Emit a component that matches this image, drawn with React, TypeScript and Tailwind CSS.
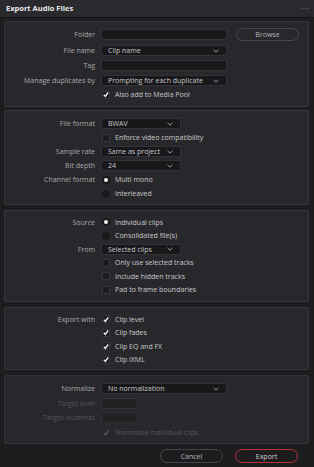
import React from "react";

function Chevron() {
  return (
    <svg width="6" height="4" viewBox="0 0 6 4" className="shrink-0">
      <path d="M0.5 0.8 L3 3.2 L5.5 0.8" fill="none" stroke="#a9a9ab" strokeWidth="0.9" />
    </svg>
  );
}

function Check({ muted }: { muted?: boolean }) {
  return (
    <svg width="7" height="7" viewBox="0 0 7 7">
      <path
        d="M1 3.9 L2.7 5.7 L6 1.2"
        fill="none"
        stroke={muted ? "#4e4e54" : "#f2f2f2"}
        strokeWidth="1.6"
      />
    </svg>
  );
}

function Row({
  label,
  children,
  dim,
  h = "h-[11px]",
}: {
  label?: string;
  children: React.ReactNode;
  dim?: boolean;
  h?: string;
}) {
  return (
    <div className={`flex items-center gap-[6px] ${h}`}>
      <span
        className={`w-[90px] shrink-0 text-right ${dim ? "text-[#55555a]" : "text-[#a8a8aa]"}`}
      >
        {label}
      </span>
      {children}
    </div>
  );
}

function Field({ w, text, drop }: { w: string; text?: string; drop?: boolean }) {
  return (
    <div
      className={`${w} flex h-[11px] items-center justify-between rounded-[1px] border border-[#333337] bg-[#18181a] pl-[6px] pr-[7px] text-[#c8c8ca]`}
    >
      <span>{text}</span>
      {drop && <Chevron />}
    </div>
  );
}

function Box({ on, muted }: { on?: boolean; muted?: boolean }) {
  return (
    <span
      className={`flex h-[8px] w-[8px] shrink-0 items-center justify-center ${
        muted ? "" : "rounded-[1px] border border-[#38383c] bg-[#1b1b1d]"
      }`}
    >
      {on && <Check muted={muted} />}
    </span>
  );
}

function Radio({ on }: { on?: boolean }) {
  return (
    <span className="flex h-[8px] w-[8px] shrink-0 items-center justify-center rounded-full bg-[#1a1a1c]">
      {on && <span className="h-[4px] w-[4px] rounded-full bg-[#f2f2f2]" />}
    </span>
  );
}

function Opt({ label, on, muted, radio }: { label: string; on?: boolean; muted?: boolean; radio?: boolean }) {
  return (
    <div className="flex items-center gap-[5px] pl-[1px]">
      {radio ? <Radio on={on} /> : <Box on={on} muted={muted} />}
      <span className={muted ? "text-[#55555a]" : "text-[#c8c8ca]"}>{label}</span>
    </div>
  );
}

function Panel({ h, mt, pt, gap, children }: { h: string; mt: string; pt: string; gap: string; children: React.ReactNode }) {
  return (
    <div
      className={`${h} ${mt} ${pt} ${gap} flex flex-col rounded-[2px] border border-[#36363a] bg-[#28282c]`}
    >
      {children}
    </div>
  );
}

export default function App() {
  return (
    <div
      className="h-[467px] w-[314px] overflow-hidden bg-[#1d1d20] text-[7px] leading-none"
      style={{ fontFamily: '"Open Sans", "Noto Sans", sans-serif' }}
    >
      <div className="flex h-[18px] items-center justify-between border-b border-[#151517] bg-[#2a2a2e] pl-[6px] pr-[5px]">
        <span className="text-[7.5px] font-bold text-[#e8e8ea]">Export Audio Files</span>
        <span className="flex gap-[1.5px]">
          <span className="h-[1.5px] w-[1.5px] rounded-full bg-[#8c8c90]" />
          <span className="h-[1.5px] w-[1.5px] rounded-full bg-[#8c8c90]" />
          <span className="h-[1.5px] w-[1.5px] rounded-full bg-[#8c8c90]" />
        </span>
      </div>

      <div className="px-[4px] pr-[5px]">
        <Panel h="h-[86px]" mt="mt-[3px]" pt="pt-[6px]" gap="gap-[4px]">
          <Row label="Folder" h="h-[13px]">
            <Field w="w-[126px]" />
            <button className="ml-[3px] flex h-[13px] w-[63px] items-center justify-center rounded-full border border-[#4a4a4e] bg-[#28282c] text-[#b3b3b6]">
              Browse
            </button>
          </Row>
          <Row label="File name">
            <Field w="w-[126px]" text="Clip name" drop />
          </Row>
          <Row label="Tag">
            <Field w="w-[126px]" />
          </Row>
          <Row label="Manage duplicates by">
            <Field w="w-[126px]" text="Prompting for each duplicate" drop />
          </Row>
          <Row h="h-[9px]">
            <Opt label="Also add to Media Pool" on />
          </Row>
        </Panel>

        <Panel h="h-[95px]" mt="mt-[3px]" pt="pt-[7px]" gap="gap-[3px]">
          <Row label="File format">
            <Field w="w-[80px]" text="BWAV" drop />
          </Row>
          <Row>
            <Opt label="Enforce video compatibility" />
          </Row>
          <Row label="Sample rate">
            <Field w="w-[80px]" text="Same as project" drop />
          </Row>
          <Row label="Bit depth">
            <Field w="w-[80px]" text="24" drop />
          </Row>
          <Row label="Channel format">
            <Opt label="Multi mono" on radio />
          </Row>
          <Row>
            <Opt label="Interleaved" radio />
          </Row>
        </Panel>

        <Panel h="h-[92px]" mt="mt-[5px]" pt="pt-[5.5px]" gap="gap-[2.6px]">
          <Row label="Source">
            <Opt label="Individual clips" on radio />
          </Row>
          <Row>
            <Opt label="Consolidated file(s)" radio />
          </Row>
          <Row label="From">
            <Field w="w-[80px]" text="Selected clips" drop />
          </Row>
          <Row>
            <Opt label="Only use selected tracks" />
          </Row>
          <Row>
            <Opt label="Include hidden tracks" />
          </Row>
          <Row>
            <Opt label="Pad to frame boundaries" />
          </Row>
        </Panel>

        <Panel h="h-[63px]" mt="mt-[5px]" pt="pt-[5.5px]" gap="gap-[2.6px]">
          <Row label="Export with">
            <Opt label="Clip level" on />
          </Row>
          <Row>
            <Opt label="Clip fades" on />
          </Row>
          <Row>
            <Opt label="Clip EQ and FX" on />
          </Row>
          <Row>
            <Opt label="Clip iXML" on />
          </Row>
        </Panel>

        <Panel h="h-[69px]" mt="mt-[5px]" pt="pt-[7px]" gap="gap-[3.5px]">
          <Row label="Normalize">
            <Field w="w-[126px]" text="No normalization" drop />
          </Row>
          <Row label="Target level" dim>
            <div className="h-[11px] w-[37px] border border-[#303034] bg-[#222225]" />
          </Row>
          <Row label="Target loudness" dim>
            <div className="h-[11px] w-[37px] border border-[#303034] bg-[#222225]" />
          </Row>
          <Row>
            <Opt label="Normalize individual clips" on muted />
          </Row>
        </Panel>

        <div className="mt-[5px] flex justify-end gap-[12px] pr-[11px]">
          <button className="flex h-[14px] w-[63px] items-center justify-center rounded-full border border-[#444448] text-[#b3b3b6]">
            Cancel
          </button>
          <button className="flex h-[14px] w-[63px] items-center justify-center rounded-full border border-[#b8323a] text-[#cfcfd2]">
            Export
          </button>
        </div>
      </div>
    </div>
  );
}
